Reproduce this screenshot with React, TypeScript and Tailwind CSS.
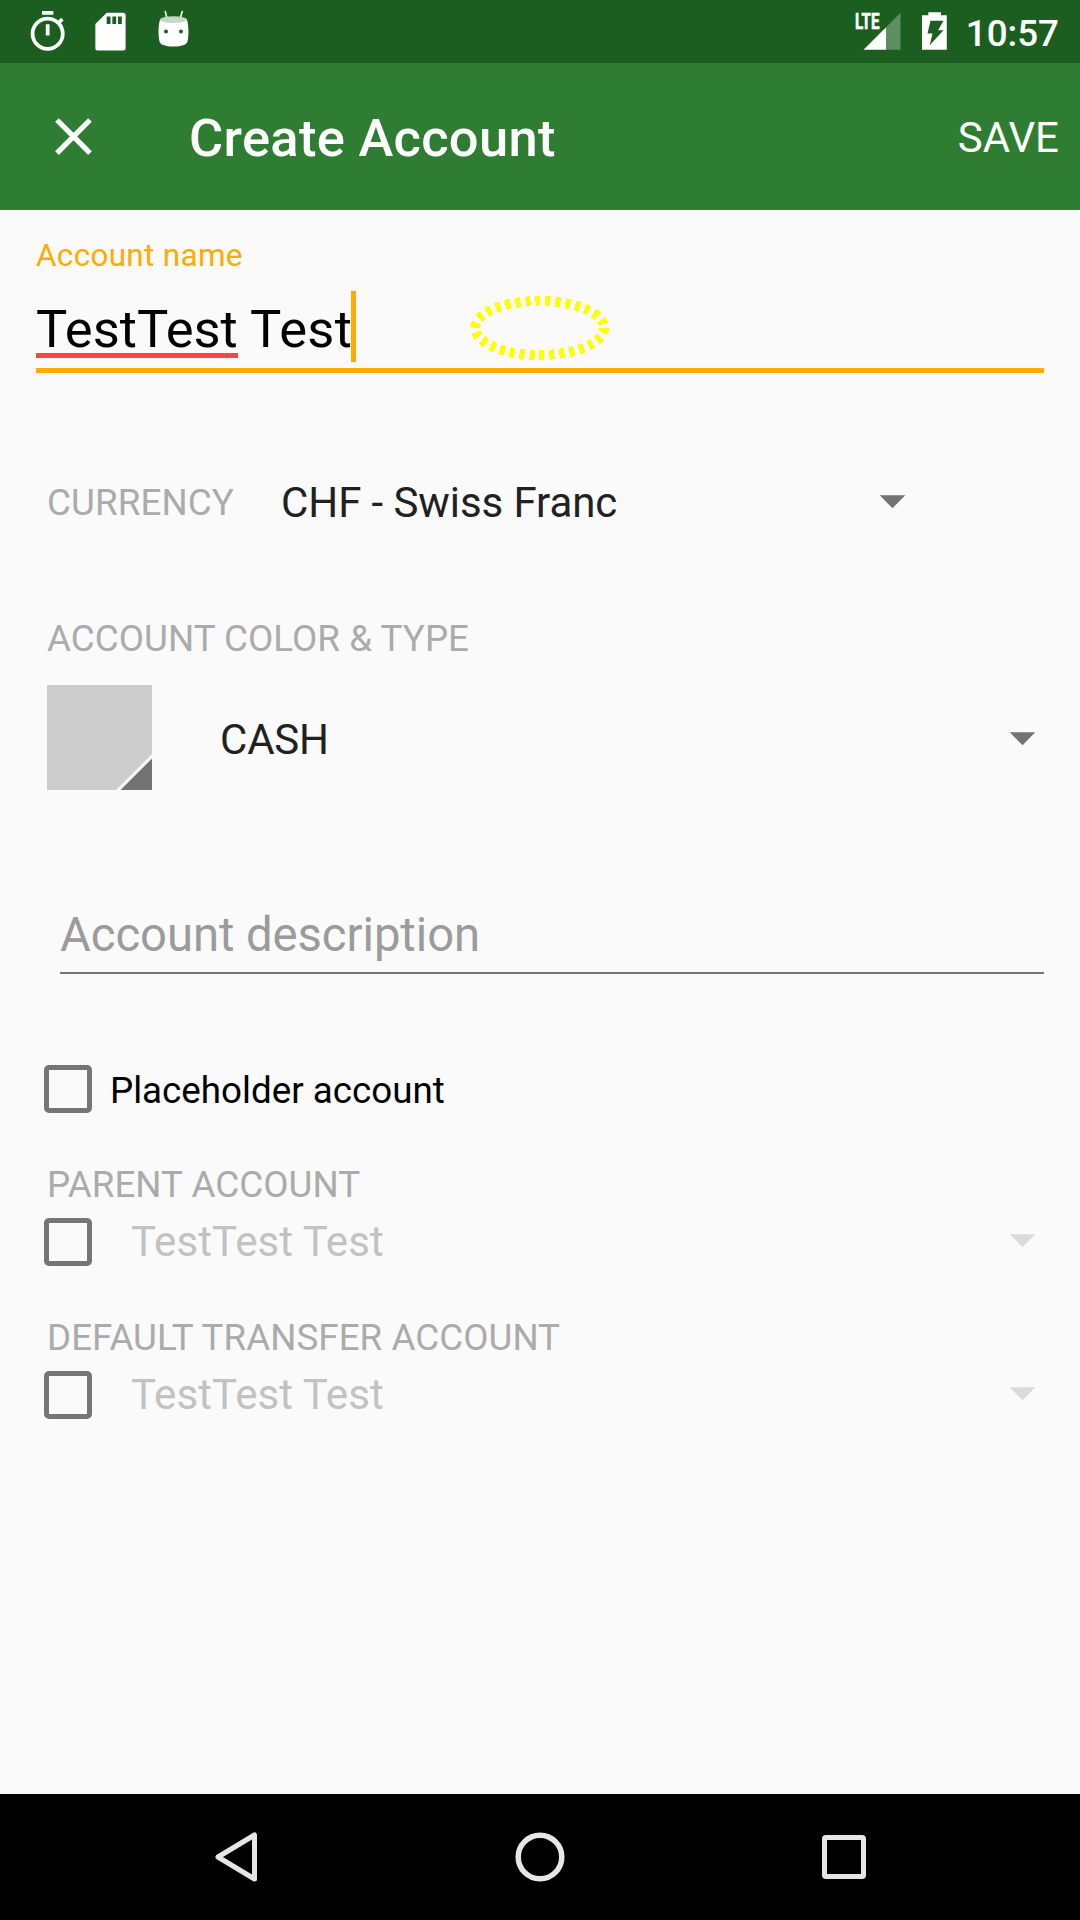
import React from "react";

function StatusBar() {
  return (
    <div className="flex h-[63px] shrink-0 items-start justify-between bg-[#1b5e20] text-white">
      <svg width="200" height="63" viewBox="0 0 200 63" fill="#fff">
        <g transform="translate(25 9.1) scale(1.89)">
          <path d="M15 1H9v2h6V1zm-4 13h2V8h-2v6zm8.03-6.61l1.42-1.42c-.43-.51-.9-.99-1.41-1.41l-1.42 1.42C16.07 4.74 14.12 4 12 4c-4.97 0-9 4.03-9 9s4.02 9 8.99 9 9-4.03 9-9c0-2.12-.74-4.07-1.96-5.61zM12 20c-3.87 0-7-3.13-7-7s3.13-7 7-7 7 3.13 7 7-3.13 7-7 7z" />
        </g>
        <g transform="translate(87.8 8.9) scale(1.89)">
          <path d="M18.8 2H10L4 8v12.8C4 21.5 4.5 22 5.2 22h13.6c.7 0 1.2-.5 1.2-1.2V3.2C20 2.500 19.500 2 18.8 2zm-6.800 6h-2V4h2v4zm3 0h-2V4h2v4zm3 0h-2V4h2v4z" />
        </g>
        <g>
          <path d="M165.300 11.500L167 18.500M182.200 11.500L180.300 18.500" stroke="#fff" strokeWidth="1.600" strokeLinecap="round" />
          <path d="M160 19.500C158.500 25 158 33 159.200 40C159.600 42.500 160.500 44 162.500 44.700C169 47.200 178 47.200 184.500 44.700C186.500 44 187.400 42.500 187.800 40C189 33 188.500 25 187 19.500Z" />
          <ellipse cx="173.500" cy="19.600" rx="13.300" ry="3.400" fill="#c6d7c7" />
          <circle cx="166" cy="31.500" r="2" fill="#1b5e20" />
          <circle cx="181" cy="31.500" r="2" fill="#1b5e20" />
        </g>
      </svg>
      <div className="flex items-start pr-[21px]">
        <svg width="114" height="63" viewBox="852 0 114 63" fill="#fff">
          <path d="M863.500 49.700L886 27.200V49.700Z" />
          <path d="M886 27.200L900.500 12.700V49.700H886Z" fillOpacity="0.300" />
          <text x="855" y="28.800" fontSize="21.500" fontWeight="700" fontFamily="Roboto, sans-serif" textLength="24.500" lengthAdjust="spacingAndGlyphs" stroke="#fff" strokeWidth="0.600">LTE</text>
          <path d="M928.300 12.300H941V15.200H946.800V49.700H922V15.200H928.300Z" />
          <path d="M930.500 20.700H943.500L938 30.300H943.500L929.700 45.300L932.500 33.600H927.500Z" fill="#1b5e20" />
        </svg>
        <span className="h-[66px] text-[36.75px] leading-[67px] font-medium">10:57</span>
      </div>
    </div>
  );
}

function Toolbar() {
  return (
    <header className="flex h-[147px] shrink-0 items-center bg-[#2e7d32] pr-[21px] pl-[42px] text-white">
      <svg width="63" height="63" viewBox="0 0 24 24" fill="#fff">
        <path d="M19 6.410L17.590 5 12 10.590 6.410 5 5 6.410 10.590 12 5 17.590 6.410 19 12 13.410 17.590 19 19 17.590 13.410 12z" />
      </svg>
      <h1 className="ml-[84px] pt-[3px] text-[52.5px] leading-[62px] font-medium tracking-[0.28px]">Create Account</h1>
      <button className="ml-auto pt-[2px] text-[42px] leading-[50px]">SAVE</button>
    </header>
  );
}

function Arrow({ disabled = false }: { disabled?: boolean }) {
  return (
    <svg width="27" height="14" viewBox="0 0 27 14" className={disabled ? "text-[#dadada]" : "text-[#737373]"}>
      <path d="M0.700 0.300H26.300L13.500 13.300Z" fill="currentColor" />
    </svg>
  );
}

function Checkbox() {
  return <span className="block size-12 shrink-0 rounded-[5px] border-[5px] border-[#757575]" />;
}

function SectionLabel({ children }: { children: React.ReactNode }) {
  return (
    <div className="h-[44px] pl-[47px] text-[36.75px] leading-[44px] tracking-[0.04px] whitespace-nowrap text-[#ababab]">{children}</div>
  );
}

function AccountPicker({ label }: { label: string }) {
  return (
    <section className="h-[153px]">
      <SectionLabel>{label}</SectionLabel>
      <div className="mt-[5px] flex h-[60px] items-center pr-[44px] pl-[44px]">
        <Checkbox />
        <span className="ml-[39px] text-[42px] leading-[60px] tracking-[0.08px] text-[#c2c2c2]">TestTest Test</span>
        <span className="ml-auto pb-[2px]">
          <Arrow disabled />
        </span>
      </div>
    </section>
  );
}

function NavBar() {
  return (
    <nav className="flex h-[126px] shrink-0 items-center justify-between bg-black pr-[214px] pl-[215px]">
      <svg width="42" height="50" viewBox="0 0 42 50" fill="none" stroke="#e6e6e6" strokeWidth="5" strokeLinejoin="round">
        <path d="M39.500 3V47L3 25Z" />
      </svg>
      <svg width="50" height="50" viewBox="0 0 50 50" fill="none" stroke="#e6e6e6" strokeWidth="5.500">
        <circle cx="25" cy="25" r="21.800" />
      </svg>
      <svg width="44" height="44" viewBox="0 0 44 44" fill="none" stroke="#e6e6e6" strokeWidth="5">
        <rect x="2.500" y="2.500" width="39" height="39" rx="1.500" />
      </svg>
    </nav>
  );
}

export default function App() {
  return (
    <div className="flex h-[1920px] w-[1080px] flex-col overflow-hidden bg-[#fafafa] font-['Roboto',sans-serif]">
      <StatusBar />
      <Toolbar />
      <main className="flex-1 pt-[25px]">
        <section className="mx-9 h-[138px] border-b-[5px] border-[#ffab00]">
          <div className="h-[42px] text-[31.5px] leading-[42px] tracking-[0.3px] text-[#ffab00]">Account name</div>
          <div className="relative mt-[14px] flex h-[77px] text-[52.5px] leading-[76px] whitespace-pre text-black">
            <span className="relative">
              TestTest
              <span className="absolute top-[62px] left-0 h-[5px] w-full bg-[#ff4444]" />
            </span>
            <span className="tracking-[0.3px]"> Test</span>
            <span className="-ml-px h-[71px] w-[5px] bg-[#ffab00]" />
            <svg className="absolute top-0 left-[430px]" width="148" height="74" viewBox="466 291 148 74" shapeRendering="crispEdges">
              <ellipse cx="539.700" cy="328" rx="64.500" ry="27" fill="none" stroke="#ffff00" strokeWidth="10" strokeDasharray="5 5" />
            </svg>
          </div>
        </section>

        <section className="mt-[100px] flex h-[60px] items-center pl-[47px]">
          <span className="w-[234px] text-[36.75px] leading-[60px] tracking-[0.1px] text-[#ababab]">CURRENCY</span>
          <span className="w-[598px] text-[42px] leading-[60px] tracking-[-0.08px] text-[#212121]">CHF - Swiss Franc</span>
          <span className="pb-[2px]">
            <Arrow />
          </span>
        </section>

        <section className="mt-[84px]">
          <SectionLabel>ACCOUNT COLOR &amp; TYPE</SectionLabel>
          <div className="mt-[24px] flex h-[105px] items-center pr-[44px] pl-[47px]">
            <svg width="105" height="105" viewBox="0 0 105 105">
              <path d="M0 0H105V105H0Z" fill="#cccccc" />
              <path d="M105 69V105H69Z" fill="#f5f5f5" />
              <path d="M105 73.500V105H73.500Z" fill="#727272" />
            </svg>
            <span className="ml-[68px] pt-[4px] text-[42px] leading-[60px] tracking-[-0.2px] text-[#212121]">CASH</span>
            <span className="ml-auto pt-[2px]">
              <Arrow />
            </span>
          </div>
        </section>

        <section className="mt-[114px] mr-9 ml-[60px] h-[70px] border-b-[2px] border-[#757575] text-[47.25px] leading-[62px] tracking-[-0.07px] text-[#9b9b9b]">
          Account description
        </section>

        <label className="mt-[85px] flex h-[60px] items-center pl-[44px]">
          <Checkbox />
          <span className="ml-[18px] pt-[4px] text-[36.75px] leading-[60px] text-black">Placeholder account</span>
        </label>

        <div className="mt-[44px]">
          <AccountPicker label="PARENT ACCOUNT" />
          <AccountPicker label="DEFAULT TRANSFER ACCOUNT" />
        </div>
      </main>
      <NavBar />
    </div>
  );
}
